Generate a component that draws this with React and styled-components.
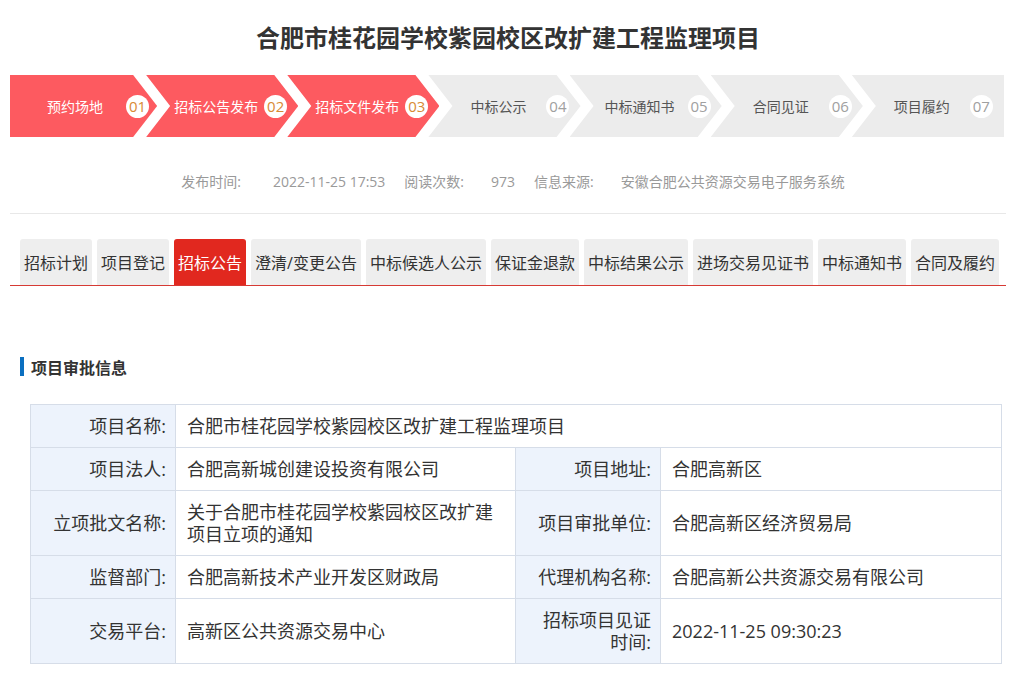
import React from "react";
import styled, { createGlobalStyle, css } from "styled-components";

const GlobalStyle = createGlobalStyle`
  html, body { margin: 0; padding: 0; background: #fff; }
  body {
    font-family: "Open Sans", "Noto Sans CJK SC", sans-serif;
    color: #333;
  }
  * { box-sizing: border-box; }
`;

const Page = styled.div`
  width: 1016px;
  padding: 0 10px;
`;

const Title = styled.h1`
  margin: 0;
  height: 75px;
  line-height: 76px;
  text-align: center;
  font-size: 24px;
  font-weight: 700;
  color: #333;
`;

const Steps = styled.div`
  display: flex;
  height: 62px;
  margin-right: 2px;
`;

const shapeFor = (pos) => {
  if (pos === "first")
    return "polygon(0 0, calc(100% - 24px) 0, 100% 50%, calc(100% - 24px) 100%, 0 100%)";
  if (pos === "last")
    return "polygon(0 0, 100% 0, 100% 100%, 0 100%, 24px 50%)";
  return "polygon(0 0, calc(100% - 24px) 0, 100% 50%, calc(100% - 24px) 100%, 0 100%, 24px 50%)";
};

const Step = styled.div`
  flex: 1 1 0;
  min-width: 0;
  margin-left: ${(p) => (p.$pos === "first" ? "0" : "-11px")};
  display: flex;
  align-items: center;
  padding-left: ${(p) => (p.$pos === "first" ? "21px" : "26px")};
  background: ${(p) => (p.$active ? "#fd5a60" : "#ececec")};
  clip-path: ${(p) => shapeFor(p.$pos)};
`;

const StepLabel = styled.span`
  width: 88px;
  text-align: center;
  font-size: 14px;
  white-space: nowrap;
  color: ${(p) => (p.$active ? "#fff" : "#555")};
`;

const StepNum = styled.span`
  margin-left: ${(p) => (p.$first ? "7px" : "4px")};
  width: 23px;
  height: 23px;
  border-radius: 50%;
  background: #fff;
  display: flex;
  align-items: center;
  justify-content: center;
  font-size: 15px;
  color: ${(p) => (p.$active ? "#d98a35" : "#a0a0a0")};
`;

const Meta = styled.div`
  display: flex;
  justify-content: center;
  padding: 34px 0 20px 10px;
  line-height: 22px;
  font-size: 14px;
  color: #999;
  border-bottom: 1px solid #e8e8e8;
`;

const MetaLabel = styled.span`
  margin-right: ${(p) => (p.$first ? "32px" : "27px")};
`;

const MetaValue = styled.span`
  margin-right: 19px;
  &:last-child { margin-right: 0; }
`;

const Tabs = styled.div`
  display: flex;
  gap: 5px;
  margin-top: 25px;
  padding-left: 10px;
  border-bottom: 1px solid #d63a34;
`;

const Tab = styled.div`
  height: 46px;
  padding: 0 4px;
  display: flex;
  align-items: center;
  font-size: 16px;
  white-space: nowrap;
  border-radius: 3px 3px 0 0;
  ${(p) =>
    p.$active
      ? css`
          background: #e1281f;
          color: #fff;
        `
      : css`
          background: #eeeeee;
          color: #333;
        `}
`;

const SectionHead = styled.div`
  margin: 71px 0 0 10px;
  display: flex;
  align-items: center;
  gap: 7px;
  height: 19px;
  font-size: 16px;
  font-weight: 700;
  color: #333;
  &::before {
    content: "";
    width: 4px;
    height: 19px;
    background: #0b6fc0;
  }
`;

const Table = styled.table`
  margin: 28px 0 0 20px;
  width: 971px;
  table-layout: fixed;
  border-collapse: collapse;
  font-size: 18px;
  line-height: 22px;
  color: #333;
`;

const Label = styled.th`
  font-weight: 400;
  text-align: right;
  background: #edf3fc;
  border: 1px solid #d6dde8;
  padding: 10px 9px 10px 16px;
  vertical-align: middle;
`;

const Value = styled.td`
  text-align: left;
  border: 1px solid #d6dde8;
  padding: 10px 12px 10px 11px;
  vertical-align: middle;
`;

const steps = [
  ["预约场地", "01", true],
  ["招标公告发布", "02", true],
  ["招标文件发布", "03", true],
  ["中标公示", "04", false],
  ["中标通知书", "05", false],
  ["合同见证", "06", false],
  ["项目履约", "07", false],
];

const tabs = [
  "招标计划",
  "项目登记",
  "招标公告",
  "澄清/变更公告",
  "中标候选人公示",
  "保证金退款",
  "中标结果公示",
  "进场交易见证书",
  "中标通知书",
  "合同及履约",
];

export default function App() {
  return (
    <>
      <GlobalStyle />
      <Page>
        <Title>合肥市桂花园学校紫园校区改扩建工程监理项目</Title>
        <Steps>
          {steps.map(([label, num, active], i) => (
            <Step
              key={num}
              $active={active}
              $pos={i === 0 ? "first" : i === steps.length - 1 ? "last" : "mid"}
            >
              <StepLabel $active={active}>{label}</StepLabel>
              <StepNum $active={active} $first={i === 0}>
                {num}
              </StepNum>
            </Step>
          ))}
        </Steps>
        <Meta>
          <MetaLabel $first>发布时间:</MetaLabel>
          <MetaValue>2022-11-25 17:53</MetaValue>
          <MetaLabel>阅读次数:</MetaLabel>
          <MetaValue>973</MetaValue>
          <MetaLabel>信息来源:</MetaLabel>
          <MetaValue>安徽合肥公共资源交易电子服务系统</MetaValue>
        </Meta>
        <Tabs>
          {tabs.map((t) => (
            <Tab key={t} $active={t === "招标公告"}>
              {t}
            </Tab>
          ))}
        </Tabs>
        <SectionHead>项目审批信息</SectionHead>
        <Table>
          <colgroup>
            <col style={{ width: 145 }} />
            <col style={{ width: 340 }} />
            <col style={{ width: 145 }} />
            <col style={{ width: 341 }} />
          </colgroup>
          <tbody>
            <tr>
              <Label>项目名称:</Label>
              <Value colSpan={3}>合肥市桂花园学校紫园校区改扩建工程监理项目</Value>
            </tr>
            <tr>
              <Label>项目法人:</Label>
              <Value>合肥高新城创建设投资有限公司</Value>
              <Label>项目地址:</Label>
              <Value>合肥高新区</Value>
            </tr>
            <tr>
              <Label>立项批文名称:</Label>
              <Value>关于合肥市桂花园学校紫园校区改扩建项目立项的通知</Value>
              <Label>项目审批单位:</Label>
              <Value>合肥高新区经济贸易局</Value>
            </tr>
            <tr>
              <Label>监督部门:</Label>
              <Value>合肥高新技术产业开发区财政局</Value>
              <Label>代理机构名称:</Label>
              <Value>合肥高新公共资源交易有限公司</Value>
            </tr>
            <tr>
              <Label>交易平台:</Label>
              <Value>高新区公共资源交易中心</Value>
              <Label>招标项目见证时间:</Label>
              <Value>2022-11-25 09:30:23</Value>
            </tr>
          </tbody>
        </Table>
      </Page>
    </>
  );
}
